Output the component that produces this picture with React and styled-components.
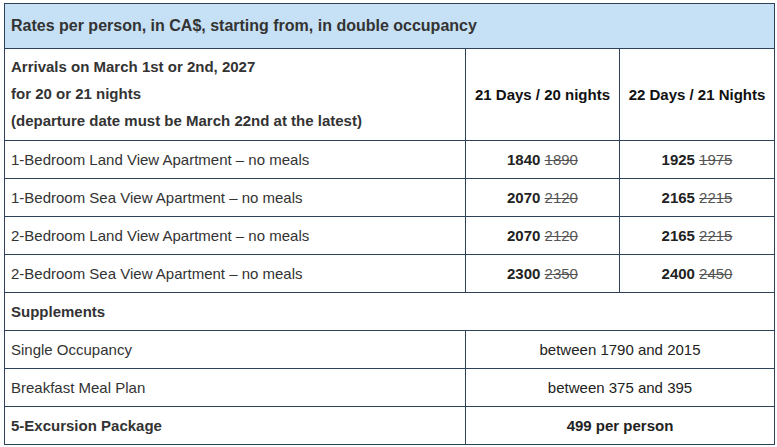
import React from 'react';
import styled, { createGlobalStyle } from 'styled-components';

const GlobalStyle = createGlobalStyle`
  body {
    margin: 0;
    background: #fff;
    font-family: "Liberation Sans", Arial, sans-serif;
    color: #333;
  }
`;

const Wrapper = styled.div`
  padding: 3px 0 0 4px;
`;

const Table = styled.table`
  width: 770px;
  border-collapse: collapse;
  table-layout: fixed;
  font-size: 15px;

  td {
    border: 1px solid #2e435a;
    padding: 8px 6px;
    line-height: 21px;
    vertical-align: middle;
  }
`;

const TitleCell = styled.td`
  background: #c6e0f5;
  font-weight: bold;
  font-size: 16px;
  && {
    padding: 11px 6px 12px;
  }
`;

const IntroCell = styled.td`
  font-weight: bold;
  && {
    line-height: 27px;
    padding: 4px 6px 6px;
  }
`;

const HeadCell = styled.td`
  font-weight: bold;
  text-align: center;
  color: #111;
`;

const PriceCell = styled.td`
  text-align: center;
  color: #222;
`;

const Now = styled.strong`
  font-weight: bold;
`;

const Was = styled.s`
  color: #555;
`;

const SectionCell = styled.td`
  font-weight: bold;
`;

const rooms = [
  ['1-Bedroom Land View Apartment – no meals', '1840', '1890', '1925', '1975'],
  ['1-Bedroom Sea View Apartment – no meals', '2070', '2120', '2165', '2215'],
  ['2-Bedroom Land View Apartment – no meals', '2070', '2120', '2165', '2215'],
  ['2-Bedroom Sea View Apartment – no meals', '2300', '2350', '2400', '2450'],
];

const Price = ({ now, was }) => (
  <PriceCell>
    <Now>{now}</Now> <Was>{was}</Was>
  </PriceCell>
);

export default function App() {
  return (
    <Wrapper>
      <GlobalStyle />
      <Table>
        <colgroup>
          <col style={{ width: 461 }} />
          <col style={{ width: 154 }} />
          <col style={{ width: 155 }} />
        </colgroup>
        <tbody>
          <tr>
            <TitleCell colSpan={3}>Rates per person, in CA$, starting from, in double occupancy</TitleCell>
          </tr>
          <tr>
            <IntroCell>
              Arrivals on March 1st or 2nd, 2027
              <br />
              for 20 or 21 nights
              <br />
              (departure date must be March 22nd at the latest)
            </IntroCell>
            <HeadCell>21 Days / 20 nights</HeadCell>
            <HeadCell>22 Days / 21 Nights</HeadCell>
          </tr>
          {rooms.map(([name, a, aw, b, bw]) => (
            <tr key={name}>
              <td>{name}</td>
              <Price now={a} was={aw} />
              <Price now={b} was={bw} />
            </tr>
          ))}
          <tr>
            <SectionCell colSpan={3}>Supplements</SectionCell>
          </tr>
          <tr>
            <td>Single Occupancy</td>
            <PriceCell colSpan={2}>between 1790 and 2015</PriceCell>
          </tr>
          <tr>
            <td>Breakfast Meal Plan</td>
            <PriceCell colSpan={2}>between 375 and 395</PriceCell>
          </tr>
          <tr>
            <SectionCell>5-Excursion Package</SectionCell>
            <PriceCell colSpan={2}>
              <Now>499 per person</Now>
            </PriceCell>
          </tr>
        </tbody>
      </Table>
    </Wrapper>
  );
}
